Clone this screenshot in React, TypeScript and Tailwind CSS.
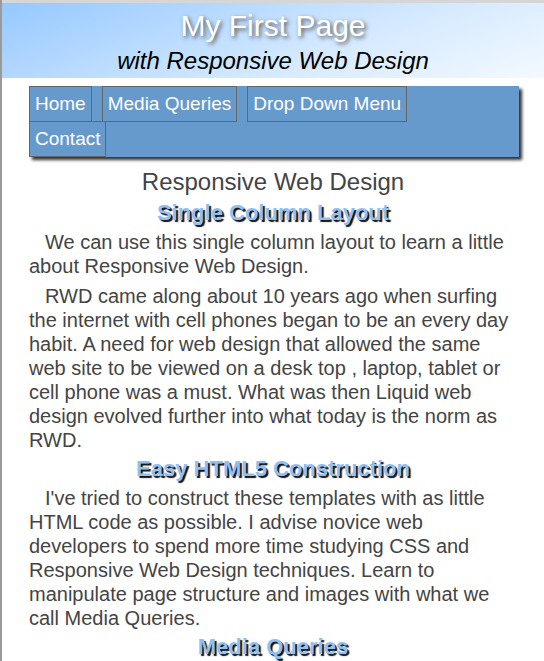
import React from 'react'

const navRow1 = ['Home', 'Media Queries', 'Drop Down Menu']

export default function App() {
  return (
    <div className="min-h-[661px] bg-white border-l-2 border-[#9a9a9a] font-['Liberation_Sans',Arial,sans-serif] text-[#444]">
      {/* top strip */}
      <div className="h-[3px] bg-[#d6d6d6]" />

      {/* ── Header ── */}
      <header className="h-[75px] bg-[linear-gradient(160deg,#95c8ff_0%,#d4e9ff_60%,#f4f9ff_100%)] text-center pt-[4px]">
        <h1 className="text-[30px] leading-[38px] text-white [text-shadow:2px_2px_4px_#555]">
          My First Page
        </h1>
        <p className="text-[24px] leading-[32px] italic text-black">
          with Responsive Web Design
        </p>
      </header>

      {/* ── Nav ── */}
      <nav className="mx-[27px] mt-[8px] w-[490px] bg-[#6699cc] shadow-[3px_3px_3px_#333]">
        <div className="flex gap-[10px]">
          {navRow1.map(t => (
            <a key={t} className="h-[36px] px-[5px] flex items-center border border-[#666] text-white text-[19px]">
              {t}
            </a>
          ))}
        </div>
        <div className="flex">
          <a className="h-[36px] -mt-px px-[5px] flex items-center border border-[#666] text-white text-[19px]">
            Contact
          </a>
        </div>
      </nav>

      {/* ── Content ── */}
      <main className="mx-[27px] w-[488px] mt-[11px]">
        <h2 className="text-center text-[24px] leading-[28px]">Responsive Web Design</h2>

        <h3 className="mt-[4px] text-center text-[22px] leading-[26px] font-bold text-[#8fc0f5] [text-shadow:2px_2px_1px_#111]">
          Single Column Layout
        </h3>
        <p className="mt-[4px] text-[20px] leading-[24px] indent-[16px]">
          We can use this single column layout to learn a little about Responsive Web Design.
        </p>
        <p className="mt-[6px] text-[20px] leading-[24px] indent-[16px]">
          RWD came along about 10 years ago when surfing the internet with cell phones began to be an every day habit. A need for web design that allowed the same web site to be viewed on a desk top , laptop, tablet or cell phone was a must. What was then Liquid web design evolved further into what today is the norm as RWD.
        </p>

        <h3 className="mt-[4px] text-center text-[22px] leading-[26px] font-bold text-[#8fc0f5] [text-shadow:2px_2px_1px_#111]">
          Easy HTML5 Construction
        </h3>
        <p className="mt-[4px] text-[20px] leading-[24px] indent-[16px]">
          I've tried to construct these templates with as little HTML code as possible. I advise novice web developers to spend more time studying CSS and Responsive Web Design techniques. Learn to manipulate page structure and images with what we call Media Queries.
        </p>

        <h3 className="mt-[4px] text-center text-[22px] leading-[26px] font-bold text-[#8fc0f5] [text-shadow:2px_2px_1px_#111]">
          Media Queries
        </h3>
      </main>
    </div>
  )
}
